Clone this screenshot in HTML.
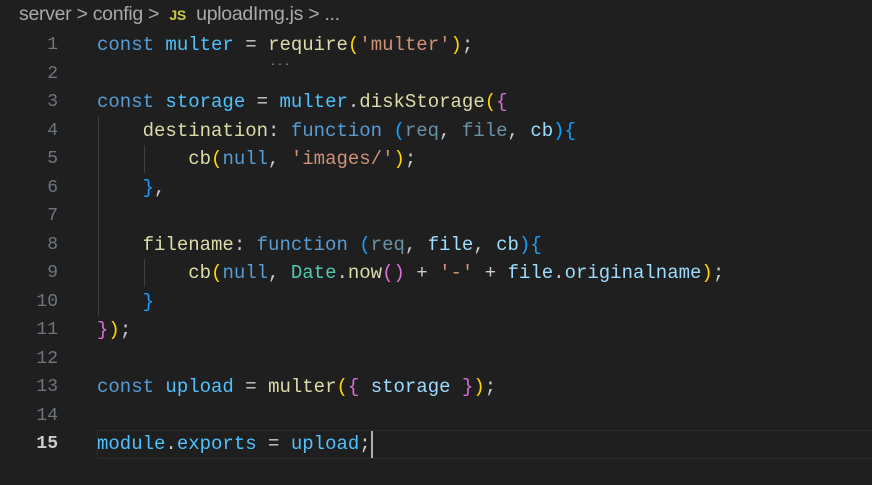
<!DOCTYPE html>
<html><head><meta charset="utf-8"><style>
body{margin:0;width:872px;height:485px;background:#1f1f1f;overflow:hidden;position:relative}
.bc{position:absolute;left:19px;top:3px;font:19.5px "Liberation Sans",sans-serif;color:#a9a9a9;white-space:pre;letter-spacing:-0.3px}
.bc .js{color:#cbcb41;font-weight:bold;font-size:14px}
.ln{position:absolute;left:0;width:58px;text-align:right;font:18px "Liberation Mono",monospace;color:#6e7681;line-height:28.5px}
.code{position:absolute;left:97px;font:19px "Liberation Mono",monospace;color:#cccccc;white-space:pre;line-height:28.5px}
.k{color:#569cd6}.v{color:#4fc1ff}.f{color:#dcdcaa}.s{color:#ce9178}.p{color:#9cdcfe}.d{color:#9cdcfe;opacity:.6}.t{color:#4ec9b0}
.b1{color:#ffd700}.b2{color:#da70d6}.b3{color:#179fff}
.g{position:absolute;width:1px;background:#404040}
</style></head><body>
<div class="bc">server &gt; config &gt;  <span class="js">JS</span>  uploadImg.js &gt; ...</div>
<div style="position:absolute;left:97px;top:430px;width:775px;height:27px;border:1px solid #2b2b2b;border-right:none"></div>
<div class="g" style="left:98px;top:117px;height:199px"></div>
<div class="g" style="left:144px;top:145px;height:28px"></div>
<div class="g" style="left:144px;top:259px;height:28px"></div>
<div class="ln" style="top:31px">1<br>2<br>3<br>4<br>5<br>6<br>7<br>8<br>9<br>10<br>11<br>12<br>13<br>14<br><span style="color:#ccc;font-weight:bold">15</span></div>
<div class="code" style="top:31px"><span class="k">const</span> <span class="v">multer</span> = <span class="f">require</span><span class="b1">(</span><span class="s">'multer'</span><span class="b1">)</span>;

<span class="k">const</span> <span class="v">storage</span> = <span class="v">multer</span>.<span class="f">diskStorage</span><span class="b1">(</span><span class="b2">{</span>
    <span class="f">destination</span>: <span class="k">function</span> <span class="b3">(</span><span class="d">req</span>, <span class="d">file</span>, <span class="p">cb</span><span class="b3">){</span>
        <span class="f">cb</span><span class="b1">(</span><span class="k">null</span>, <span class="s">'images/'</span><span class="b1">)</span>;
    <span class="b3">}</span>,

    <span class="f">filename</span>: <span class="k">function</span> <span class="b3">(</span><span class="d">req</span>, <span class="p">file</span>, <span class="p">cb</span><span class="b3">){</span>
        <span class="f">cb</span><span class="b1">(</span><span class="k">null</span>, <span class="t">Date</span>.<span class="f">now</span><span class="b2">()</span> + <span class="s">'-'</span> + <span class="p">file</span>.<span class="p">originalname</span><span class="b1">)</span>;
    <span class="b3">}</span>
<span class="b2">}</span><span class="b1">)</span>;

<span class="k">const</span> <span class="v">upload</span> = <span class="f">multer</span><span class="b1">(</span><span class="b2">{</span> <span class="p">storage</span> <span class="b2">}</span><span class="b1">)</span>;

<span class="v">module</span>.<span class="v">exports</span> = <span class="v">upload</span>;</div>
<div style="position:absolute;left:371px;top:431px;width:2px;height:27px;background:#aeafad"></div>
<div style="position:absolute;left:270px;top:58px;font:10px monospace;color:#aaa;letter-spacing:1px">...</div>
</body></html>
